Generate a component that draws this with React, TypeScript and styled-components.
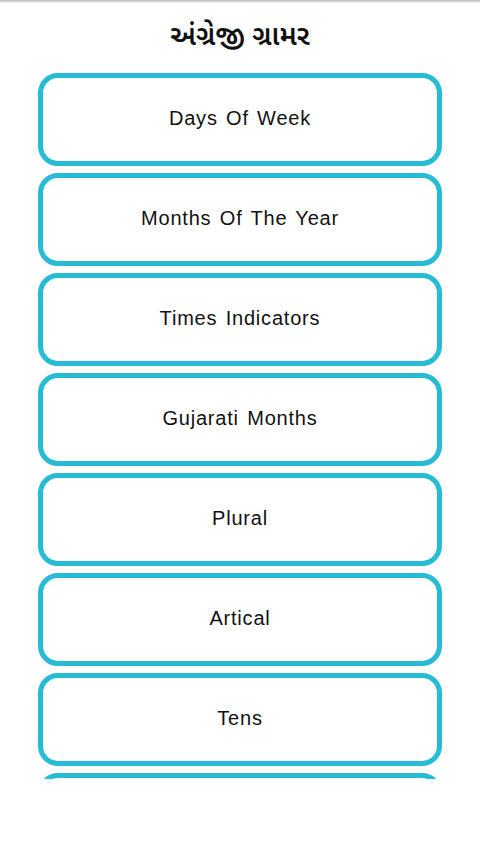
import styled, { createGlobalStyle } from "styled-components";

const GlobalStyle = createGlobalStyle`
  html, body {
    margin: 0;
    padding: 0;
    background: #ffffff;
  }
  body {
    font-family: "Liberation Sans", Arial, sans-serif;
  }
`;

const Screen = styled.div`
  width: 480px;
  height: 854px;
  display: flex;
  flex-direction: column;
  background: #ffffff;
  overflow: hidden;
`;

const TopShade = styled.div`
  flex: 0 0 3px;
  background: linear-gradient(#b8b8b8, #f4f4f4);
`;

const Title = styled.h1`
  margin: 0;
  flex: 0 0 64px;
  display: flex;
  align-items: center;
  justify-content: center;
  font-family: "Noto Sans Gujarati", "Noto Sans", "DejaVu Sans", sans-serif;
  font-size: 28px;
  font-weight: 600;
  color: #111111;
  padding-top: 6px;
  box-sizing: border-box;
`;

const List = styled.div`
  flex: 0 0 706px;
  overflow: hidden;
  display: flex;
  flex-direction: column;
  gap: 7px;
  padding: 6px 38px 0;
`;

const Item = styled.button`
  flex: 0 0 93px;
  width: 100%;
  border: 5px solid #27bcd6;
  border-radius: 20px;
  background: #ffffff;
  display: flex;
  align-items: center;
  justify-content: center;
  font-family: "Liberation Sans", Arial, sans-serif;
  font-size: 20px;
  letter-spacing: 0.8px;
  word-spacing: 2px;
  color: #111111;
  padding: 0 0 2px;
  cursor: pointer;
`;

const items = [
  "Days Of Week",
  "Months Of The Year",
  "Times Indicators",
  "Gujarati Months",
  "Plural",
  "Artical",
  "Tens",
  "",
];

export default function App() {
  return (
    <Screen>
      <GlobalStyle />
      <TopShade />
      <Title>અંગ્રેજી ગ્રામર</Title>
      <List>
        {items.map((label, i) => (
          <Item key={i}>{label}</Item>
        ))}
      </List>
    </Screen>
  );
}
